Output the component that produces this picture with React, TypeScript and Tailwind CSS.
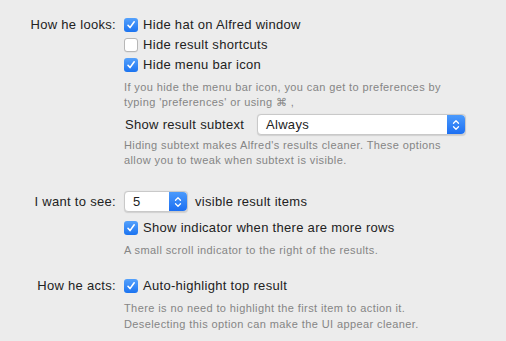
import React from 'react';

function Check({ checked }: { checked: boolean }) {
    if (!checked) {
        return <span className="w-[14px] h-[14px] shrink-0 rounded-[3px] bg-white border border-[#b7b7b7] shadow-[0_0.5px_0.5px_rgba(0,0,0,0.08)]" />;
    }
    return (
        <span className="w-[14px] h-[14px] shrink-0 rounded-[3px] bg-gradient-to-b from-[#54a1fc] to-[#1a73f0] flex items-center justify-center">
            <svg width="10" height="10" viewBox="0 0 10 10" fill="none">
                <path d="M2 5.3 L4 7.6 L8.2 1.8" stroke="white" strokeWidth="1.6" strokeLinecap="round" strokeLinejoin="round" />
            </svg>
        </span>
    );
}

function Stepper() {
    return (
        <span className="h-full w-[18px] shrink-0 rounded-r-[4px] bg-gradient-to-b from-[#4b9afc] to-[#1c6ff2] flex items-center justify-center">
            <svg width="8" height="12" viewBox="0 0 8 12" fill="none">
                <path d="M1.5 4.3 L4 1.8 L6.5 4.3 M1.5 7.7 L4 10.2 L6.5 7.7" stroke="white" strokeWidth="1.3" strokeLinecap="round" strokeLinejoin="round" />
            </svg>
        </span>
    );
}

function CheckRow({ label, checked }: { label: string; checked: boolean }) {
    return (
        <div className="h-[20px] flex items-center gap-[5px]">
            <Check checked={checked} />
            <span>{label}</span>
        </div>
    );
}

export default function App() {
    return (
        <div className="w-[506px] h-[341px] overflow-hidden bg-[#ececec] text-[13px] tracking-[0.3px] text-[#222] font-['Liberation_Sans',Arial,sans-serif]">
            {/* How he looks */}
            <div className="grid grid-cols-[116px_1fr] gap-x-2 pt-[15px]">
                <div className="h-[20px] flex items-center justify-end">How he looks:</div>
                <div>
                    <CheckRow label="Hide hat on Alfred window" checked />
                    <CheckRow label="Hide result shortcuts" checked={false} />
                    <CheckRow label="Hide menu bar icon" checked />
                    <p className="mt-[5px] text-[11px] tracking-[0.4px] leading-[15px] text-[#858585]">
                        If you hide the menu bar icon, you can get to preferences by<br />
                        typing 'preferences' or using ⌘ ,
                    </p>
                    <div className="mt-[4px] flex items-center">
                        <span className="w-[133px] pl-px">Show result subtext</span>
                        <div className="w-[209px] h-[21px] flex items-center rounded-[4px] bg-white border border-[#c9c9c9] shadow-[0_0.5px_1px_rgba(0,0,0,0.12)]">
                            <span className="flex-1 pl-[8px]">Always</span>
                            <Stepper />
                        </div>
                    </div>
                    <p className="mt-[3px] text-[11px] tracking-[0.4px] leading-[15px] text-[#858585]">
                        Hiding subtext makes Alfred's results cleaner. These options<br />
                        allow you to tweak when subtext is visible.
                    </p>
                </div>
            </div>

            {/* I want to see */}
            <div className="grid grid-cols-[116px_1fr] gap-x-2 mt-[23px]">
                <div className="h-[21px] flex items-center justify-end">I want to see:</div>
                <div>
                    <div className="flex items-center gap-[7px]">
                        <div className="w-[64px] h-[21px] flex items-center rounded-[4px] bg-white border border-[#c9c9c9] shadow-[0_0.5px_1px_rgba(0,0,0,0.12)]">
                            <span className="flex-1 pl-[8px]">5</span>
                            <Stepper />
                        </div>
                        <span>visible result items</span>
                    </div>
                    <div className="mt-[6px]">
                        <CheckRow label="Show indicator when there are more rows" checked />
                    </div>
                    <p className="mt-[5px] text-[11px] tracking-[0.4px] leading-[15px] text-[#858585]">
                        A small scroll indicator to the right of the results.
                    </p>
                </div>
            </div>

            {/* How he acts */}
            <div className="grid grid-cols-[116px_1fr] gap-x-2 mt-[18px]">
                <div className="h-[20px] flex items-center justify-end">How he acts:</div>
                <div>
                    <CheckRow label="Auto-highlight top result" checked />
                    <p className="mt-[4px] text-[11px] tracking-[0.4px] leading-[16px] text-[#858585]">
                        There is no need to highlight the first item to action it.<br />
                        Deselecting this option can make the UI appear cleaner.
                    </p>
                </div>
            </div>
        </div>
    );
}
